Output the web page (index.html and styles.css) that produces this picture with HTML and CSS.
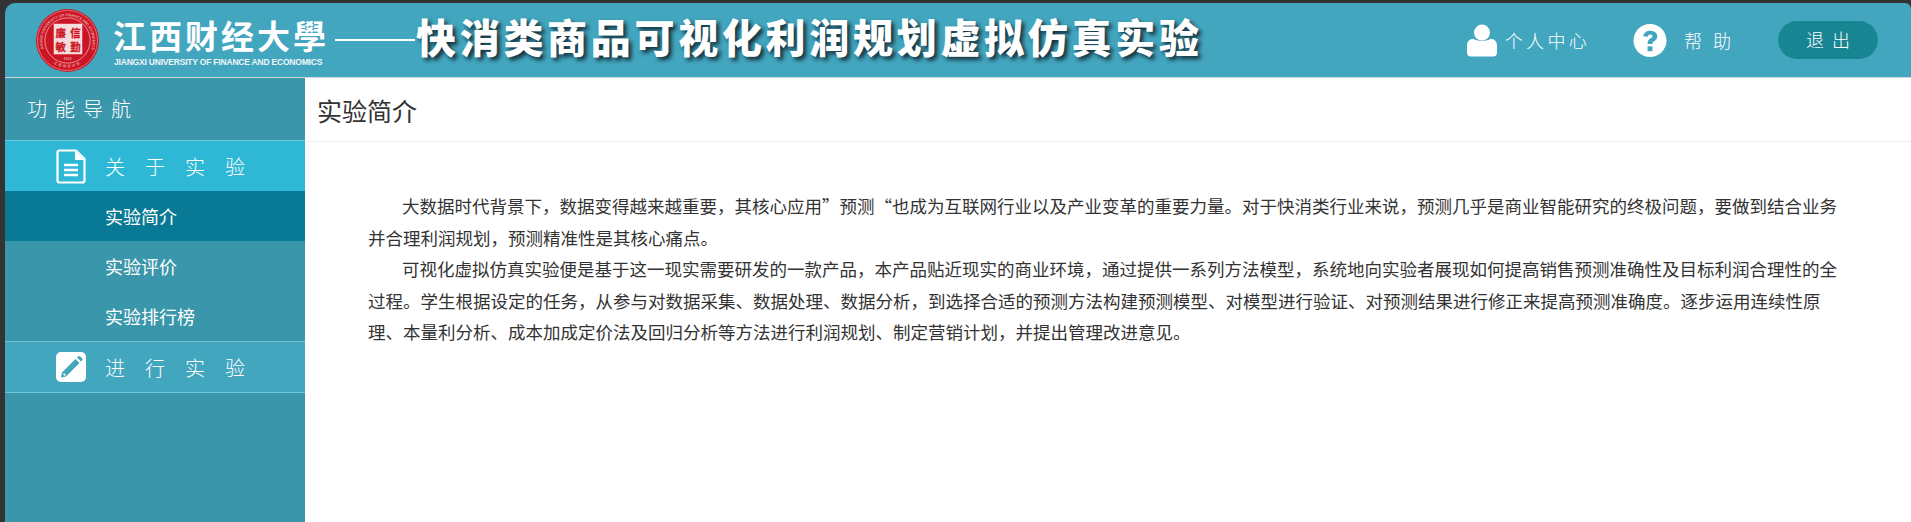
FILE: index.html
```html
<!DOCTYPE html>
<html lang="zh-CN">
<head>
    <meta charset="UTF-8">
    <title>快消类商品可视化利润规划虚拟仿真实验</title>
    <link rel="stylesheet" href="styles.css">
</head>
<body>
    <div class="app">
        <!-- 顶部 -->
        <header class="header">
            <svg class="seal" viewBox="0 0 64 64">
                <defs>
                    <path id="sealTop" d="M10.500 46.500a25.500 25.500 0 1 1 43 0"/>
                    <path id="sealBottom" d="M8 46a28.500 28.500 0 0 0 48 0"/>
                </defs>
                <circle cx="32" cy="32" r="32" fill="#cc1524"/>
                <circle cx="32" cy="32" r="30.500" fill="none" stroke="#f3c6c6" stroke-width=".5"/>
                <circle cx="32" cy="32" r="23" fill="none" stroke="#f3c6c6" stroke-width=".7"/>
                <text class="seal-ring"><textPath href="#sealTop" startOffset="50%" text-anchor="middle">JIANGXI UNIVERSITY OF FINANCE AND ECONOMICS</textPath></text>
                <text class="seal-ring seal-cn"><textPath href="#sealBottom" startOffset="50%" text-anchor="middle">江西财经大学</textPath></text>
                <rect x="18" y="15" width="29" height="31" fill="#f6dcdc"/>
                <text class="seal-char" x="25" y="28">廉</text>
                <text class="seal-char" x="40" y="28">信</text>
                <text class="seal-char" x="25" y="43">敏</text>
                <text class="seal-char" x="40" y="43">勤</text>
                <text class="seal-year" x="32" y="52">1923</text>
            </svg>
            <div class="school">
                <div class="school-cn">江西财经大學</div>
                <div class="school-en">JIANGXI UNIVERSITY OF FINANCE AND ECONOMICS</div>
            </div>
            <div class="dash"></div>
            <div class="title">快消类商品可视化利润规划虚拟仿真实验</div>

            <div class="user-nav">
                <a class="nav-item nav-user">
                    <svg class="nav-icon" viewBox="0 0 32 34">
                        <circle cx="16" cy="8.500" r="8.500" fill="#fff"/>
                        <path d="M7 15c3 3 15 3 18 0 4 0 7 3 7 7v8c0 2.500-1.500 4-4 4H4c-2.500 0-4-1.500-4-4v-8c0-4 3-7 7-7z" fill="#fff"/>
                    </svg>
                    <span>个人中心</span>
                </a>
                <a class="nav-item nav-help">
                    <svg class="nav-icon" viewBox="0 0 34 34">
                        <circle cx="17" cy="17" r="17" fill="#fff"/>
                        <path d="M10 12.500c.6-3.500 3.500-5.500 7.300-5.500 4.200 0 7.200 2.400 7.200 5.800 0 2.400-1.300 3.700-3 4.800-1.400.9-2 1.500-2 3h-5c0-3.100 1-4.500 3-5.800 1.200-.8 2-1.300 2-2.300 0-1-.9-1.700-2.200-1.700-1.500 0-2.400.9-2.700 2.300z" fill="#43a6bf"/>
                        <rect x="14.500" y="23" width="5" height="5" fill="#43a6bf"/>
                    </svg>
                    <span>帮助</span>
                </a>
                <a class="logout">退出</a>
            </div>
        </header>

        <div class="main">
            <!-- 左侧导航 -->
            <aside class="sidebar">
                <div class="side-title">功能导航</div>
                <div class="menu-group menu-active">
                    <svg class="menu-icon" viewBox="0 0 30 35">
                        <path d="M1.500 3.500c0-1.300.7-2 2-2H20l8.500 8.500v21.500c0 1.300-.7 2-2 2h-23c-1.300 0-2-.7-2-2z" fill="none" stroke="#fff" stroke-width="2.200"/>
                        <path d="M19 2v9h9z" fill="#fff"/>
                        <path d="M8 16h14M8 21h14M8 26h14" stroke="#fff" stroke-width="2.400"/>
                    </svg>
                    <span>关于实验</span>
                </div>
                <ul class="submenu">
                    <li class="current">实验简介</li>
                    <li>实验评价</li>
                    <li>实验排行榜</li>
                </ul>
                <div class="menu-group menu-bordered">
                    <svg class="menu-icon" viewBox="0 0 30 30">
                        <rect width="30" height="30" rx="5" fill="#fff"/>
                        <path d="M6 20.500 19.500 7l4 4L10 24.500l-5 1z" fill="#43a6bf"/>
                        <path d="M21 5.500l1-1c.7-.7 1.500-.7 2.200 0l1.800 1.800c.7.700.7 1.500 0 2.200l-1 1z" fill="#43a6bf"/>
                        <path d="M7.500 21.500l2 2" stroke="#fff" stroke-width="1.200"/>
                    </svg>
                    <span>进行实验</span>
                </div>
            </aside>

            <!-- 内容 -->
            <section class="content">
                <h2 class="content-title">实验简介</h2>
                <div class="article">
                    <p>大数据时代背景下，数据变得越来越重要，其核心应用”预测“也成为互联网行业以及产业变革的重要力量。对于快消类行业来说，预测几乎是商业智能研究的终极问题，要做到结合业务并合理利润规划，预测精准性是其核心痛点。</p>
                    <p>可视化虚拟仿真实验便是基于这一现实需要研发的一款产品，本产品贴近现实的商业环境，通过提供一系列方法模型，系统地向实验者展现如何提高销售预测准确性及目标利润合理性的全过程。学生根据设定的任务，从参与对数据采集、数据处理、数据分析，到选择合适的预测方法构建预测模型、对模型进行验证、对预测结果进行修正来提高预测准确度。逐步运用连续性原理、本量利分析、成本加成定价法及回归分析等方法进行利润规划、制定营销计划，并提出管理改进意见。</p>
                </div>
            </section>
        </div>
    </div>
</body>
</html>
```

FILE: styles.css
```css
* {
    box-sizing: border-box;
}

html, body {
    height: 100%;
    margin: 0;
}

body {
    background-color: #333;
    font-family: "Noto Sans CJK SC", "Noto Sans", sans-serif;
    overflow: hidden;
}

.app {
    display: flex;
    flex-direction: column;
    height: 100%;
    padding: 3px 0 0 5px;
}

.header {
    display: flex;
    align-items: center;
    flex: none;
    height: 75px;
    padding-left: 31px;
    background-color: #43a6bf;
    border-top-left-radius: 10px;
    border-top-right-radius: 6px;
    border-bottom: 1px solid #cfd6d8;
}

.seal {
    flex: none;
    width: 63px;
    height: 63px;
}

.seal-ring {
    font-size: 3.800px;
    fill: #f6dcdc;
    font-family: "Liberation Sans", sans-serif;
}

.seal-cn {
    font-family: "Noto Sans CJK SC", sans-serif;
    font-size: 3.400px;
    letter-spacing: 1.500px;
}

.seal-char {
    font-size: 10.500px;
    font-weight: 700;
    fill: #cc1524;
    stroke: #cc1524;
    stroke-width: .3;
    text-anchor: middle;
}

.seal-year {
    font-size: 3.600px;
    fill: #f6dcdc;
    text-anchor: middle;
    font-family: "Liberation Sans", sans-serif;
}

.school {
    flex: none;
    width: 208px;
    margin-left: 15px;
    color: #fff;
}

.school-cn {
    margin-left: -1px;
    font-size: 33px;
    font-weight: 700;
    line-height: 44px;
    letter-spacing: 3px;
    white-space: nowrap;
}

.school-en {
    font-family: "Liberation Sans", Arial, sans-serif;
    font-size: 8.500px;
    font-weight: 700;
    line-height: 10px;
    letter-spacing: -.2px;
    color: #eef6f8;
    white-space: nowrap;
}

.dash {
    flex: none;
    width: 80px;
    height: 2px;
    margin-left: 13px;
    background-color: #fff;
}

.title {
    flex: none;
    width: 800px;
    margin-top: -9px;
    margin-left: 1px;
    font-size: 40px;
    font-weight: 900;
    letter-spacing: 3.700px;
    line-height: 50px;
    color: #fff;
    text-shadow: 3px 3px 4px #122c37;
    white-space: nowrap;
}

.user-nav {
    display: flex;
    align-items: center;
    margin-left: auto;
    padding-right: 33px;
    color: #fff;
    font-weight: 300;
}

.nav-item {
    display: flex;
    align-items: center;
    font-size: 18px;
}

.nav-icon {
    display: block;
    width: 30px;
    height: 33px;
}

.nav-user span {
    margin-left: 8px;
    letter-spacing: 3.300px;
}

.nav-help {
    margin-left: 43px;
}

.nav-help .nav-icon {
    width: 34px;
}

.nav-help span {
    margin-left: 17px;
    letter-spacing: 11px;
}

.logout {
    width: 100px;
    height: 38px;
    margin-left: 36px;
    padding-left: 8px;
    border-radius: 19px;
    background-color: #188593;
    font-size: 18px;
    letter-spacing: 8px;
    line-height: 36px;
    text-align: center;
}

.main {
    display: flex;
    flex: 1;
    min-height: 0;
}

.sidebar {
    flex: none;
    width: 300px;
    background-color: #3a96aa;
    color: #fff;
    font-weight: 300;
}

.side-title {
    height: 62px;
    padding-left: 22px;
    font-size: 20px;
    letter-spacing: 8px;
    line-height: 62px;
}

.menu-group {
    display: flex;
    align-items: center;
    height: 52px;
    padding-left: 51px;
    font-size: 20px;
    letter-spacing: 20px;
}

.menu-active {
    height: 51px;
    background-color: #2eb8d6;
    border-top: 1px solid #67c8dd;
}

.menu-bordered {
    background-color: #43a6bf;
    border-top: 1px solid #6ec5da;
    border-bottom: 1px solid #6ec5da;
}

.menu-icon {
    flex: none;
    display: block;
    width: 30px;
    height: 35px;
    margin-right: 19px;
}

.menu-bordered .menu-icon {
    height: 30px;
}

.submenu {
    list-style: none;
    margin: 0;
    padding: 0;
}

.submenu li {
    height: 50px;
    padding-left: 100px;
    font-size: 18px;
    font-weight: 400;
    line-height: 50px;
}

.submenu .current {
    background-color: #097a96;
}

.content {
    flex: 1;
    min-width: 0;
    background-color: #fff;
    color: #333;
}

.content-title {
    height: 64px;
    margin: 0;
    padding-left: 12px;
    font-size: 25px;
    font-weight: 400;
    line-height: 64px;
    border-bottom: 1px solid #eee;
}

.article {
    padding: 48px 67px 0 63px;
    font-size: 17.500px;
    line-height: 31.500px;
}

.article p {
    margin: 0;
    text-indent: 34px;
}
```
